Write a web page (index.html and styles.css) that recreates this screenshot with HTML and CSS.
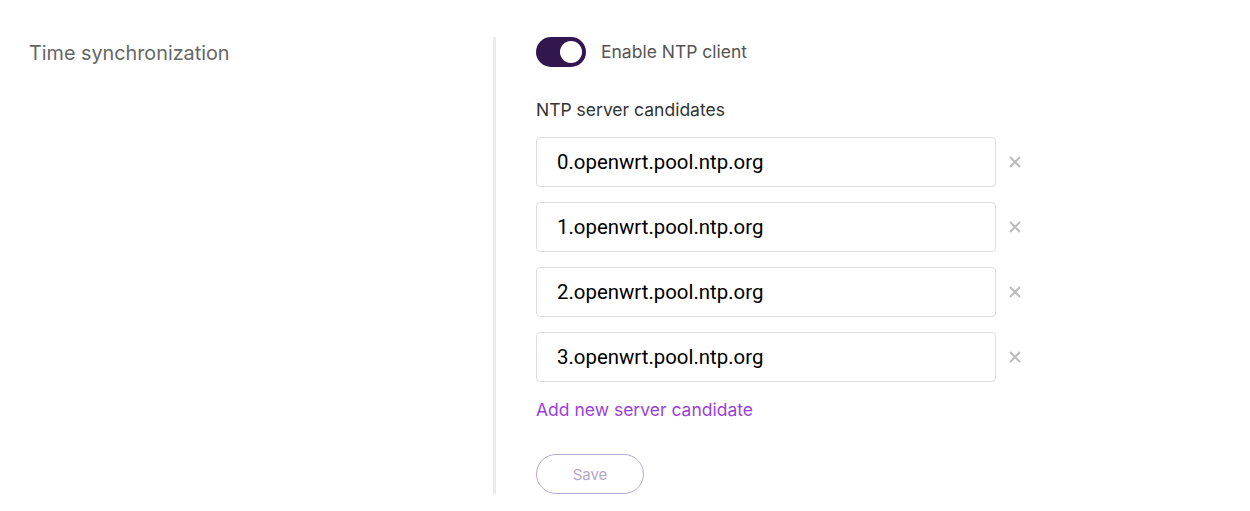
FILE: index.html
```html
<!DOCTYPE html>
<html>
<head>
<meta charset="utf-8">
<link rel="stylesheet" href="styles.css">
</head>
<body>
<div class="section">
  <div class="side">
    <div class="side-title">Time synchronization</div>
  </div>
  <div class="main">
    <div class="toggle-row">
      <span class="toggle"><span class="knob"></span></span>
      <span class="toggle-label">Enable NTP client</span>
    </div>
    <div class="field-label">NTP server candidates</div>
    <div class="list">
      <div class="item">
        <div class="input">0.openwrt.pool.ntp.org</div>
        <svg class="remove" width="12" height="12" viewBox="0 0 12 12"><path d="M1 1L11 11M11 1L1 11"/></svg>
      </div>
      <div class="item">
        <div class="input">1.openwrt.pool.ntp.org</div>
        <svg class="remove" width="12" height="12" viewBox="0 0 12 12"><path d="M1 1L11 11M11 1L1 11"/></svg>
      </div>
      <div class="item">
        <div class="input">2.openwrt.pool.ntp.org</div>
        <svg class="remove" width="12" height="12" viewBox="0 0 12 12"><path d="M1 1L11 11M11 1L1 11"/></svg>
      </div>
      <div class="item">
        <div class="input">3.openwrt.pool.ntp.org</div>
        <svg class="remove" width="12" height="12" viewBox="0 0 12 12"><path d="M1 1L11 11M11 1L1 11"/></svg>
      </div>
    </div>
    <div class="add-link">Add new server candidate</div>
    <div class="save">Save</div>
  </div>
</div>
</body>
</html>
```

FILE: styles.css
```css
html, body {
  margin: 0;
  padding: 0;
  background: #fff;
}
body {
  font-family: Inter, "Noto Sans", sans-serif;
}
.section {
  display: flex;
  padding-top: 37px;
}
.side {
  width: 464px;
  padding-left: 29px;
  padding-top: 1px;
}
.side-title {
  font-size: 19.8px;
  line-height: 30px;
  color: #666;
}
.main {
  border-left: 3px solid #ebebeb;
  padding-left: 40px;
}
.toggle-row {
  display: flex;
  align-items: center;
  gap: 15px;
  height: 30px;
}
.toggle {
  width: 50px;
  height: 30px;
  border-radius: 15px;
  background: #311650;
  display: flex;
  align-items: center;
  justify-content: flex-end;
  padding-right: 4px;
  box-sizing: border-box;
}
.knob {
  width: 22px;
  height: 22px;
  border-radius: 50%;
  background: #fff;
}
.toggle-label {
  font-size: 17.5px;
  line-height: 24px;
  color: #555;
}
.field-label {
  margin-top: 31px;
  font-size: 17.5px;
  line-height: 24px;
  color: #333;
}
.list {
  margin-top: 15px;
  display: flex;
  flex-direction: column;
  gap: 15px;
}
.item {
  display: flex;
  align-items: center;
  gap: 13px;
}
.input {
  width: 460px;
  height: 50px;
  box-sizing: border-box;
  border: 1px solid #ddd;
  border-radius: 4px;
  padding-left: 20px;
  display: flex;
  align-items: center;
  font-family: Roboto, "Liberation Sans", sans-serif;
  font-size: 20.4px;
  color: #000;
}
.remove path {
  stroke: #bdbdbd;
  stroke-width: 2;
  fill: none;
}
.add-link {
  margin-top: 16px;
  font-size: 17.5px;
  line-height: 24px;
  color: #9b3fd9;
}
.save {
  margin-top: 32px;
  width: 108px;
  height: 40px;
  box-sizing: border-box;
  border: 1px solid #b9abcf;
  border-radius: 20px;
  display: flex;
  align-items: center;
  justify-content: center;
  font-size: 15px;
  color: #b5a8c8;
}
```
